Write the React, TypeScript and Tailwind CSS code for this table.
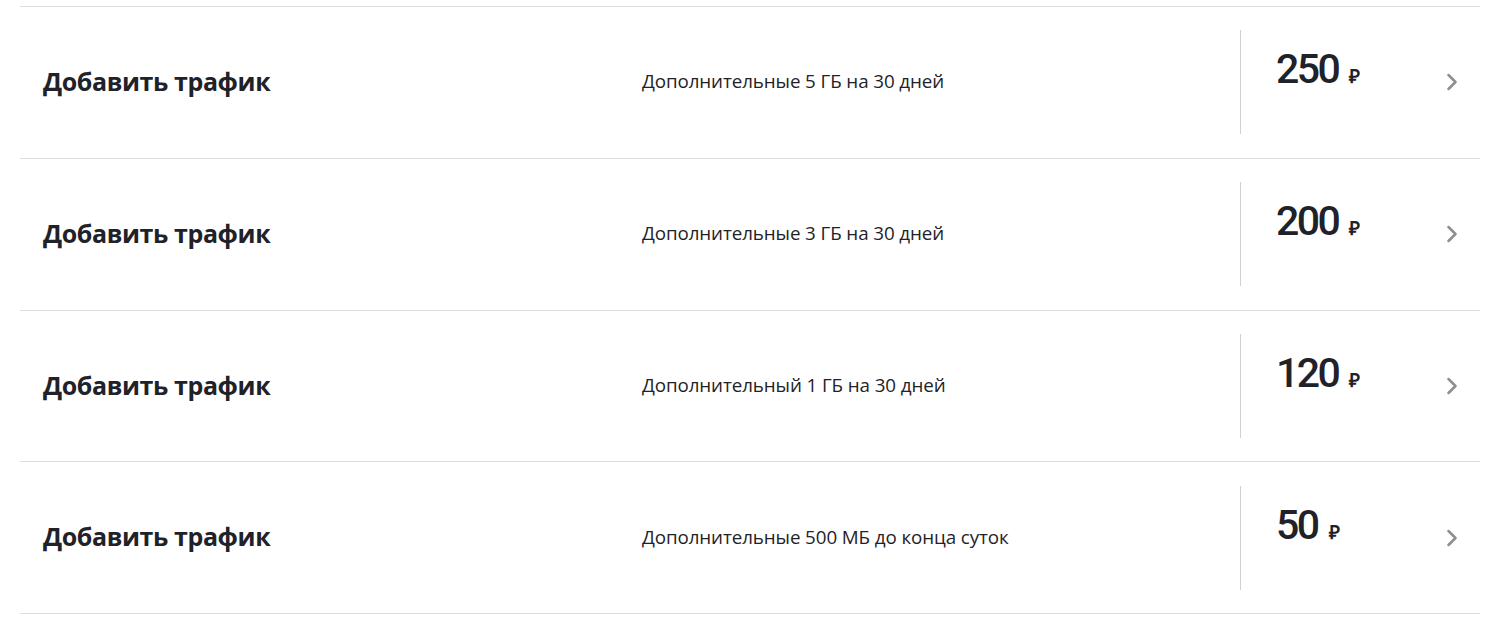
import { ChevronRight } from 'lucide-react'

interface Offer {
  title: string
  desc: string
  price: number
}

const OFFERS: Offer[] = [
  { title: 'Добавить трафик', desc: 'Дополнительные 5 ГБ на 30 дней', price: 250 },
  { title: 'Добавить трафик', desc: 'Дополнительные 3 ГБ на 30 дней', price: 200 },
  { title: 'Добавить трафик', desc: 'Дополнительный 1 ГБ на 30 дней', price: 120 },
  { title: 'Добавить трафик', desc: 'Дополнительные 500 МБ до конца суток', price: 50 },
]

export default function App() {
  return (
    <div className="bg-white w-[1500px] h-[624px] pt-[6px] px-5 font-['Open_Sans',sans-serif] text-[#1f2229]">
      <div className="border-t border-[#dcdfe2]">
        {OFFERS.map((o) => (
          <div
            key={o.price}
            className="grid grid-cols-[622px_598px_1fr] h-[151.75px] items-center border-b border-[#dcdfe2]"
          >
            {/* название */}
            <div className="pl-[23px] text-[25px] font-bold tracking-[-0.4px] -mt-[1px]">{o.title}</div>
            {/* описание */}
            <div className="text-[18.8px] leading-none tracking-[-0.1px] -mt-[1px]">{o.desc}</div>
            {/* цена */}
            <div className="h-[104px] border-l border-[#cdd1d4] flex items-start justify-between pl-[35px] pr-[14px]">
              <div className="flex items-baseline mt-[19px] gap-[11px]">
                <span className="text-[41px] font-medium leading-none tracking-[-2.5px] font-['Roboto',sans-serif]">
                  {o.price}
                </span>
                <span className="text-[19px] font-bold leading-none">₽</span>
              </div>
              <ChevronRight className="mt-[38px] text-[#8c8f93]" size={28} strokeWidth={2.2} />
            </div>
          </div>
        ))}
      </div>
    </div>
  )
}
